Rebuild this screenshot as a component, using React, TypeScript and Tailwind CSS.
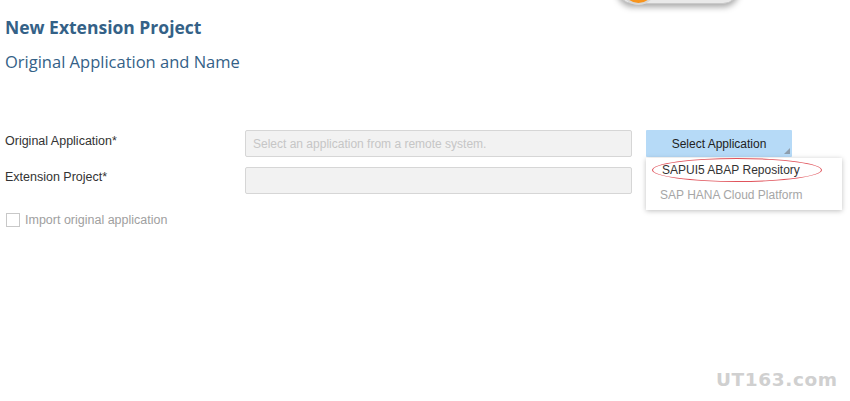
export default function App() {
  return (
    <div className="relative w-[850px] h-[401px] overflow-hidden bg-white font-['Liberation_Sans',Arial,sans-serif]">
      {/* top decoration peeking in */}
      <div className="absolute left-[617px] top-[-28px] w-[122px] h-[32px] rounded-full bg-[#e9e9e9] border border-[#c9c9c9] shadow-[0_3px_6px_rgba(0,0,0,0.35)]" />
      <div className="absolute left-[621px] top-[-30px] w-[35px] h-[35px] rounded-full bg-[#f7941d] border-2 border-[#d8d8d8]" />

      <div className="px-[5px] pt-[15px]">
        <h1 className="font-['Open_Sans',sans-serif] text-[17.5px] leading-[24px] font-bold text-[#346187]">
          New Extension Project
        </h1>
        <h2 className="mt-[11px] font-['Open_Sans',sans-serif] text-[16.5px] leading-[24px] text-[#346187]">
          Original Application and Name
        </h2>

        <div className="mt-[56px] grid grid-cols-[226px_387px_146px] gap-x-[14px] gap-y-[10px]">
          <label className="pt-[3px] text-[12.5px] leading-[16px] text-[#333]">Original Application*</label>
          <div className="h-[27px] rounded-[2px] border border-[#d6d6d6] bg-[#f2f2f2] px-[7px] flex items-center text-[12px] text-[#c6c6c6]">
            Select an application from a remote system.
          </div>
          <div className="relative">
            <button className="relative w-full h-[27px] bg-[#b6daf7] text-[12px] text-[#222] rounded-[1px]">
              Select Application
              <span className="absolute right-[2px] bottom-[3px] w-0 h-0 border-l-[6px] border-l-transparent border-b-[6px] border-b-[#8e9eae]" />
            </button>
            <div className="absolute left-0 top-[28px] w-[196px] bg-white shadow-[0_1px_5px_rgba(0,0,0,0.25)] pb-[2px] text-[12px] leading-[25px]">
              <div className="relative pl-[16px] text-[#333]">
                SAPUI5 ABAP Repository
                <span className="absolute left-[6px] top-[0px] w-[170px] h-[24px] rounded-[50%] border border-[#e0545c]" />
              </div>
              <div className="pl-[14px] text-[#a6a6a6]">SAP HANA Cloud Platform</div>
            </div>
          </div>

          <label className="pt-[2px] text-[12.5px] leading-[16px] text-[#333]">Extension Project*</label>
          <div className="h-[27px] rounded-[2px] border border-[#d6d6d6] bg-[#f2f2f2]" />
          <div />
        </div>

        <div className="mt-[17px] flex items-center gap-[5px] pl-[1px]">
          <span className="w-[14px] h-[14px] border border-[#c8c8c8] bg-white" />
          <span className="text-[12.5px] text-[#a0a0a0]">Import original application</span>
        </div>
      </div>

      <div className="absolute left-[716px] top-[366px] font-['DejaVu_Sans',sans-serif] font-bold text-[18.5px] text-[#d0d0d0] tracking-[0.6px]">
        UT163.com
      </div>
    </div>
  );
}
